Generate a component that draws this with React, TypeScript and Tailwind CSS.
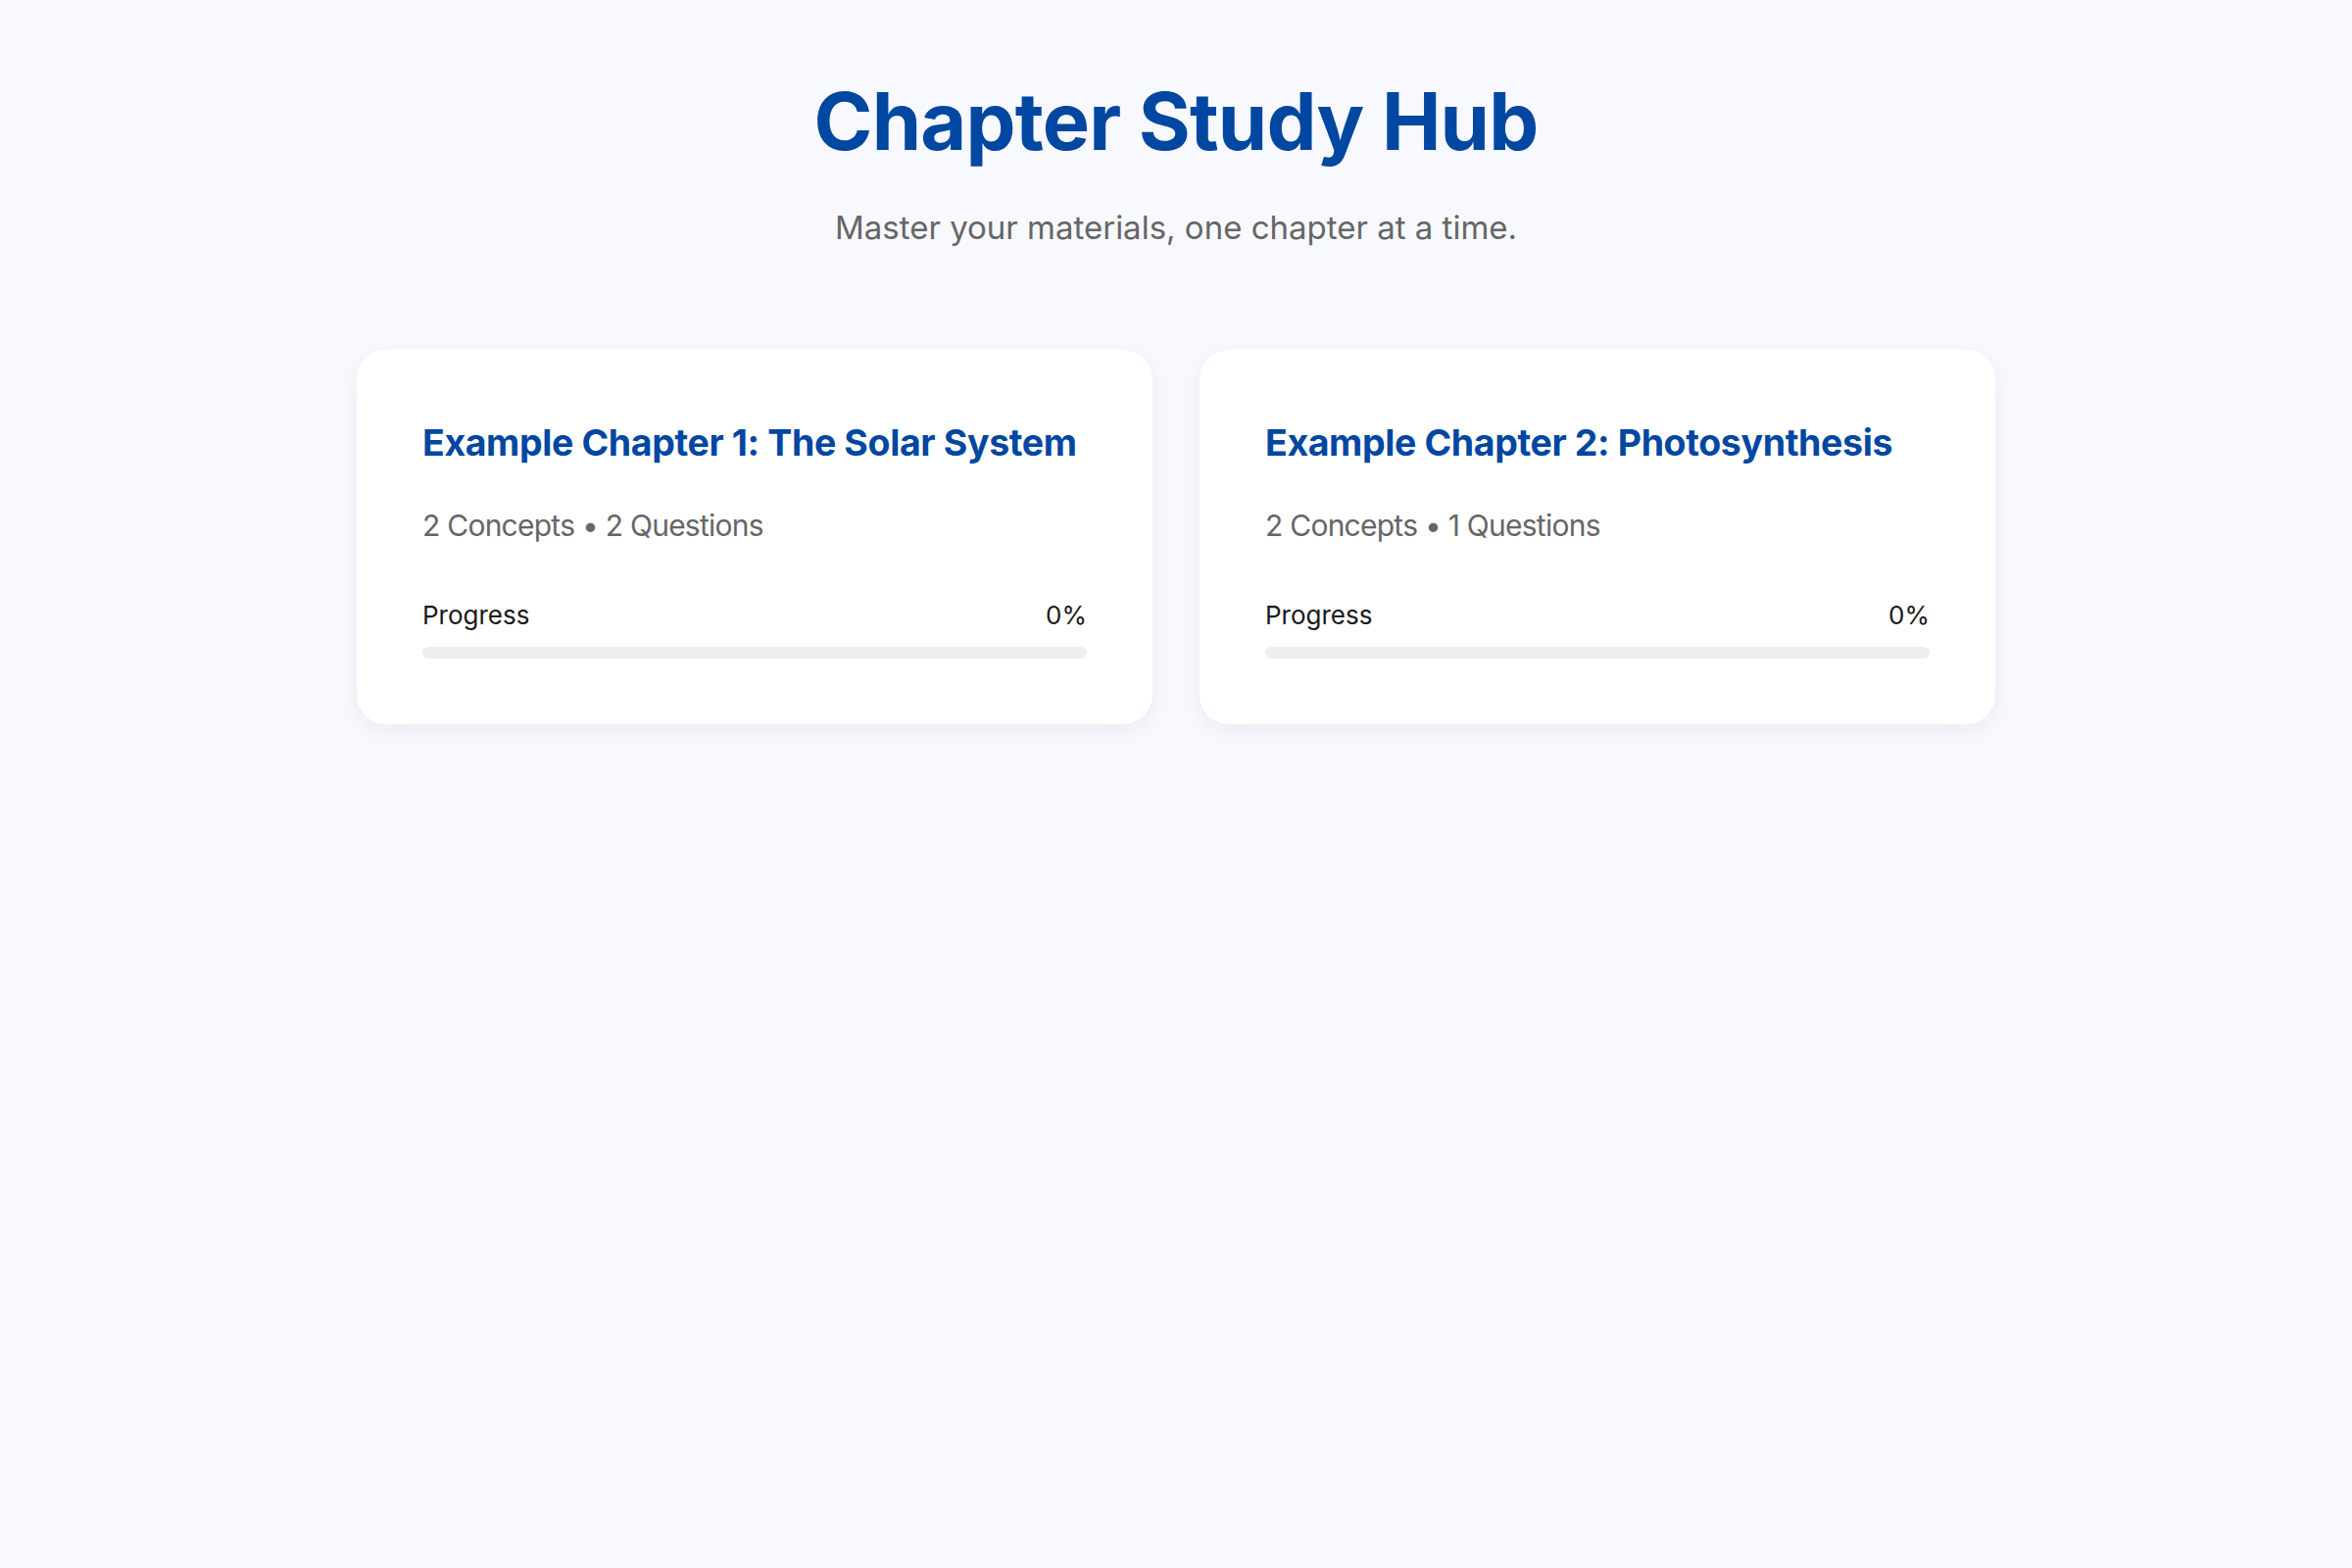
const chapters = [
  { id: 1, title: 'Example Chapter 1: The Solar System', concepts: 2, questions: 2, progress: 0 },
  { id: 2, title: 'Example Chapter 2: Photosynthesis', concepts: 2, questions: 1, progress: 0 },
];

function ChapterCard({ chapter }: { chapter: (typeof chapters)[number] }) {
  return (
    <div className="bg-white rounded-[30px] px-[67px] pt-[70px] pb-[67px] shadow-[0_6px_20px_rgba(20,30,80,0.06)]">
      <h2 className="text-[37.5px] leading-[50px] font-bold text-[#0047a1] tracking-[-0.01em] whitespace-nowrap">
        {chapter.title}
      </h2>
      <p className="mt-[38px] text-[30px] leading-[42px] text-[#666666] tracking-[-0.025em]">
        {chapter.concepts} Concepts • {chapter.questions} Questions
      </p>
      <div className="mt-[53px] flex justify-between text-[26px] leading-[36px] text-[#1a1a1a]">
        <span>Progress</span>
        <span>{chapter.progress}%</span>
      </div>
      <div className="mt-[14px] h-[12px] rounded-full bg-[#eeeeee] overflow-hidden">
        <div className="h-full bg-[#0047a1]" style={{ width: `${chapter.progress}%` }} />
      </div>
    </div>
  );
}

export default function App() {
  return (
    <div className="min-h-screen bg-[#f8f9fe] font-['Inter',sans-serif]">
      <div className="max-w-[1672px] mx-auto pt-[74px]">
        <header className="text-center">
          <h1 className="text-[81px] leading-[100px] font-bold text-[#0047a1] tracking-[-0.01em]">
            Chapter Study Hub
          </h1>
          <p className="mt-[35px] text-[33px] leading-[46px] text-[#666666]">
            Master your materials, one chapter at a time.
          </p>
        </header>
        <div className="mt-[102px] grid grid-cols-2 gap-[48px]">
          {chapters.map((c) => (
            <ChapterCard key={c.id} chapter={c} />
          ))}
        </div>
      </div>
    </div>
  );
}
